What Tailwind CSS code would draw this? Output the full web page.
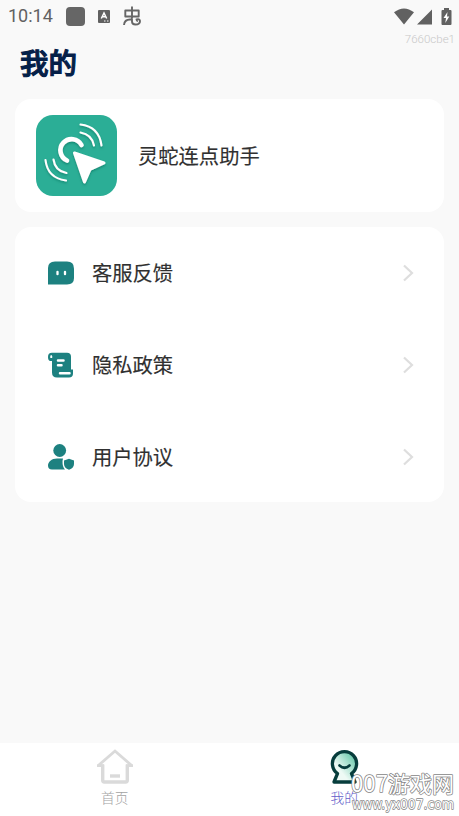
<!DOCTYPE html>
<html lang="zh-CN">
<head>
<meta charset="utf-8">
<title>我的</title>
<script src="https://cdn.jsdelivr.net/npm/@tailwindcss/browser@4"></script>
</head>
<body class="w-[459px] h-[816px] overflow-hidden bg-[#f9f9f9] font-['Noto_Sans_CJK_SC',sans-serif]">
<div class="relative flex h-[816px] w-[459px] flex-col">
  <header class="flex h-8 shrink-0 items-center pl-2 text-[#616161]">
    <span class="w-[58px] font-[Roboto,sans-serif] text-[18px] leading-8">10:14</span>
    <span class="size-[19px] rounded-[4px] bg-[#666]"></span>
    <svg class="ml-[13px] h-[13px] w-3" viewBox="0 0 12 13"><rect width="12" height="13" rx="1" fill="#616161"/><path d="M3.300 8.500 6 3 8.700 8.500M4.500 6.800h3" fill="none" stroke="#fff" stroke-width="1.500"/><path d="M6 11h1.500M9 11h1.500" stroke="#fff"/></svg>
    <svg class="ml-[13px] h-5 w-[19px]" viewBox="0 0 19 20" fill="none" stroke="#666" stroke-width="1.900" stroke-linejoin="round"><path d="M2.300 4.500h13.400v6H2.300zM9 .5v12M1 19q.5-5.500 6-5.500h2v2q0 3 3.500 3 4.500 0 4.500-3.500-.5-2.500-3.500-1.500 0 1.500 1.500 1.500"/></svg>
    <svg class="ml-auto mr-[3px] h-[19px] w-[62px]" viewBox="0 0 62 19" fill="#616161"><path d="M0 5.300Q10 -2.500 20 5.300L10 17.500zM23 17.500 38 2.500v15zM48.500 3h1.500V1h5v2h1.500q1 0 1 1v13q0 1-1 1h-8q-1 0-1-1V4q0-1 1-1z"/><path d="M53.500 5 49.500 11H52l-.7 5 4-6.500h-2.300z" fill="#fff"/></svg>
  </header>
  <div class="flex h-[67px] shrink-0 justify-between pl-5 pr-1">
    <h1 class="pt-[10px] text-[28.5px] font-medium leading-10 text-[#052048] [-webkit-text-stroke:1.1px_#052048]">我的</h1>
    <span class="font-[Roboto,sans-serif] text-[11.5px] font-light leading-[14px] text-[#c8c8c8]">7660cbe1</span>
  </div>
  <section class="mx-[15px] flex h-[113px] shrink-0 items-center rounded-[16px] bg-white pl-[21px]">
    <svg class="size-[81px]" viewBox="0 0 81 81">
      <defs><filter id="s" x="-20%" y="-20%" width="150%" height="150%"><feDropShadow dx="0" dy="1.500" stdDeviation="1.200" flood-color="#056b57" flood-opacity=".55"/></filter></defs>
      <rect width="81" height="81" rx="17" fill="#2bae96"/>
      <g filter="url(#s)" fill="none" stroke="#fff" stroke-linecap="round">
        <path d="M31 45.500A11.200 11.200 0 1 1 45.500 30" stroke-width="4.600"/>
        <path d="M44.500 9.500Q63 11.500 65.500 30.500M44.500 17.500Q56 19.500 58 30.500M9.500 45Q11.500 63 30 65.500M17.500 44.500Q19 56 30.500 58" stroke-width="2.100"/>
        <path d="M38.500 38 68 48 54 54.500 48.500 67z" fill="#fff" stroke-width="3" stroke-linejoin="round"/>
      </g>
    </svg>
    <span class="ml-[21px] pb-[2px] text-[20.3px] leading-8 text-[#303030] [-webkit-text-stroke:0.15px_#303030]">灵蛇连点助手</span>
  </section>
  <main class="mx-[15px] mt-[15px] flex h-[275px] shrink-0 flex-col rounded-[16px] bg-white pl-[33px] pr-[30px] text-[20.3px] text-[#303030] [-webkit-text-stroke:0.15px_#303030]">
    <div class="flex h-[92px] items-center">
      <svg class="h-6 w-[26px]" viewBox="0 0 26 24"><path d="M0 23.500V7Q0 .5 7 .5h12q7 0 7 7V17q0 6.500-7 6.500z" fill="#1d8180"/><path d="M9.500 10.800v2.400M17 10.800v2.400" stroke="#fff" stroke-width="2.300" stroke-linecap="round"/></svg>
      <span class="ml-[18px] pb-[2px]">客服反馈</span>
      <svg class="ml-auto h-[18px] w-3" viewBox="0 0 12 18"><path d="m2 1.500 8 7.500-8 7.500" fill="none" stroke="#dedede" stroke-width="2.200"/></svg>
    </div>
    <div class="flex h-[92px] items-center">
      <svg class="h-[26px] w-[26px]" viewBox="0 0 26 26"><path d="M4 .8h15q4 0 4 4v12.700h2v4q0 4-4 4H9q-5 0-5-5V9H2Q0 8.500 0 5 0 .8 4 .8z" fill="#1d8180"/><path d="M2.300 6V4.500Q2.300 3 3.200 3T4.200 4.500V6z" fill="#fff"/><path d="M10 8.500h5.500M10 13.300h3.500M12 21.300h9.500" stroke="#fff" stroke-width="2.500" stroke-linecap="round"/></svg>
      <span class="ml-[18px] pb-[2px]">隐私政策</span>
      <svg class="ml-auto h-[18px] w-3" viewBox="0 0 12 18"><path d="m2 1.500 8 7.500-8 7.500" fill="none" stroke="#dedede" stroke-width="2.200"/></svg>
    </div>
    <div class="flex h-[91px] items-center">
      <svg class="h-[26px] w-[26px]" viewBox="0 0 26 26"><circle cx="11.700" cy="6.500" r="6.400" fill="#1d8180"/><path d="M15 14.500H9C3.500 14.500 0 18 0 21.500Q0 25.500 4 25.500H17Q14.300 23 14.500 17z" fill="#1d8180"/><path d="M21 14.700 26 16.500v3.500q0 4-5 5.700-5-1.700-5-5.700v-3.500z" fill="#1d8180"/></svg>
      <span class="ml-[18px] pb-px">用户协议</span>
      <svg class="ml-auto h-[18px] w-3" viewBox="0 0 12 18"><path d="m2 1.500 8 7.500-8 7.500" fill="none" stroke="#dedede" stroke-width="2.200"/></svg>
    </div>
  </main>
  <nav class="mt-auto grid h-[73px] shrink-0 grid-cols-2 bg-white text-[13.7px] font-light leading-[18px]">
    <div class="flex flex-col items-center pt-[6px] text-[#a3a3a3]">
      <svg class="h-[35px] w-[38px]" viewBox="0 0 38 35" fill="none" stroke="#dadada" stroke-width="3.400"><path d="M2 16.800 19 2l17 14.800M1 16.600h7M30 16.600h7" stroke-width="2.800"/><path d="M6.700 15.500v15.800q0 1.700 1.700 1.700h21.200q1.700 0 1.700-1.700V15.500"/><path d="M14 27h10"/></svg>
      <span class="mt-[4px]">首页</span>
    </div>
    <div class="flex flex-col items-center pt-[6px] text-[#625dc9]">
      <svg class="h-[36px] w-[29px]" viewBox="0 0 29 36"><defs><linearGradient id="g" x1="0" y1="1" x2="1" y2="0"><stop offset=".35" stop-color="#eefaf5"/><stop offset="1" stop-color="#49bd99"/></linearGradient></defs><path d="M7.500 24.500A12.100 12.100 0 1 1 21.500 24.500L25 33H4z" fill="url(#g)" stroke="#073d3c" stroke-width="3.300" stroke-linejoin="round"/><path d="M9.500 16.500Q14.500 21 19.500 16.500" fill="none" stroke="#073d3c" stroke-width="2.700" stroke-linecap="round"/></svg>
      <span class="mt-[3px]">我的</span>
    </div>
  </nav>
  <svg class="absolute left-[346px] top-[764px] h-[52px] w-[113px]" viewBox="0 -4 113 52" fill="#fff" stroke="#858585" stroke-width="1.500" stroke-linejoin="round" paint-order="stroke" font-family="'Noto Sans CJK SC', sans-serif">
    <text x="5" y="24" font-size="23.500" textLength="37" lengthAdjust="spacingAndGlyphs">007</text>
    <text x="42" y="23.500" font-size="22" textLength="66" lengthAdjust="spacingAndGlyphs">游戏网</text>
    <text x="6" y="41" font-size="14.500" textLength="102" lengthAdjust="spacingAndGlyphs" font-family="'DejaVu Sans', sans-serif">www.yx007.com</text>
  </svg>
</div>
</body>
</html>
